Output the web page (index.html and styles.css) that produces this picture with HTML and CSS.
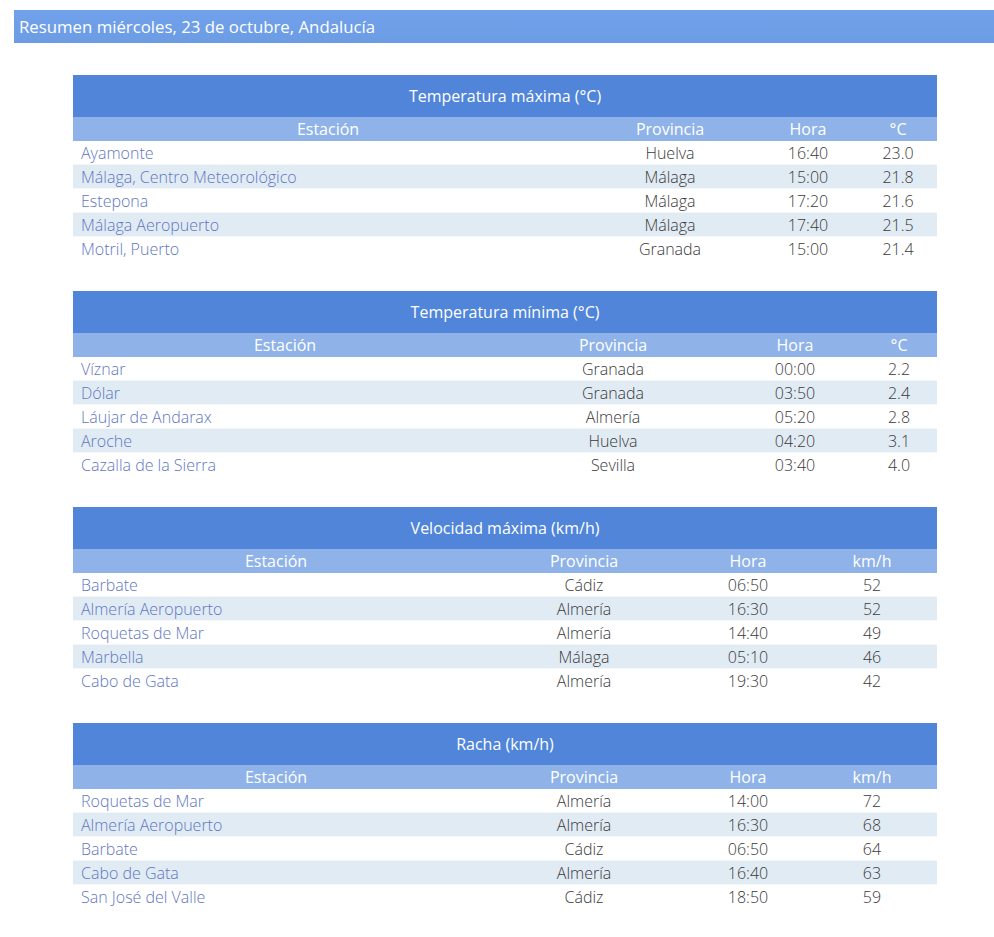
FILE: index.html
```html
<!DOCTYPE html>
<html lang="es">
<head>
<meta charset="utf-8">
<title>Resumen</title>
<link rel="stylesheet" href="styles.css">
</head>
<body>
<div class="page">
  <div class="topbar">Resumen miércoles, 23 de octubre, Andalucía</div>
  <div class="tables">
    <table class="data t1">
      <colgroup><col class="c1"><col class="c2"><col class="c3"><col class="c4"></colgroup>
      <thead>
        <tr class="title"><th colspan="4">Temperatura máxima (°C)</th></tr>
        <tr class="head"><th>Estación</th><th>Provincia</th><th>Hora</th><th>°C</th></tr>
      </thead>
      <tbody>
        <tr><td class="st">Ayamonte</td><td>Huelva</td><td>16:40</td><td>23.0</td></tr>
        <tr><td class="st">Málaga, Centro Meteorológico</td><td>Málaga</td><td>15:00</td><td>21.8</td></tr>
        <tr><td class="st">Estepona</td><td>Málaga</td><td>17:20</td><td>21.6</td></tr>
        <tr><td class="st">Málaga Aeropuerto</td><td>Málaga</td><td>17:40</td><td>21.5</td></tr>
        <tr><td class="st">Motril, Puerto</td><td>Granada</td><td>15:00</td><td>21.4</td></tr>
      </tbody>
    </table>
    <table class="data t2">
      <colgroup><col class="c1"><col class="c2"><col class="c3"><col class="c4"></colgroup>
      <thead>
        <tr class="title"><th colspan="4">Temperatura mínima (°C)</th></tr>
        <tr class="head"><th>Estación</th><th>Provincia</th><th>Hora</th><th>°C</th></tr>
      </thead>
      <tbody>
        <tr><td class="st">Víznar</td><td>Granada</td><td>00:00</td><td>2.2</td></tr>
        <tr><td class="st">Dólar</td><td>Granada</td><td>03:50</td><td>2.4</td></tr>
        <tr><td class="st">Láujar de Andarax</td><td>Almería</td><td>05:20</td><td>2.8</td></tr>
        <tr><td class="st">Aroche</td><td>Huelva</td><td>04:20</td><td>3.1</td></tr>
        <tr><td class="st">Cazalla de la Sierra</td><td>Sevilla</td><td>03:40</td><td>4.0</td></tr>
      </tbody>
    </table>
    <table class="data t3">
      <colgroup><col class="c1"><col class="c2"><col class="c3"><col class="c4"></colgroup>
      <thead>
        <tr class="title"><th colspan="4">Velocidad máxima (km/h)</th></tr>
        <tr class="head"><th>Estación</th><th>Provincia</th><th>Hora</th><th>km/h</th></tr>
      </thead>
      <tbody>
        <tr><td class="st">Barbate</td><td>Cádiz</td><td>06:50</td><td>52</td></tr>
        <tr><td class="st">Almería Aeropuerto</td><td>Almería</td><td>16:30</td><td>52</td></tr>
        <tr><td class="st">Roquetas de Mar</td><td>Almería</td><td>14:40</td><td>49</td></tr>
        <tr><td class="st">Marbella</td><td>Málaga</td><td>05:10</td><td>46</td></tr>
        <tr><td class="st">Cabo de Gata</td><td>Almería</td><td>19:30</td><td>42</td></tr>
      </tbody>
    </table>
    <table class="data t3">
      <colgroup><col class="c1"><col class="c2"><col class="c3"><col class="c4"></colgroup>
      <thead>
        <tr class="title"><th colspan="4">Racha (km/h)</th></tr>
        <tr class="head"><th>Estación</th><th>Provincia</th><th>Hora</th><th>km/h</th></tr>
      </thead>
      <tbody>
        <tr><td class="st">Roquetas de Mar</td><td>Almería</td><td>14:00</td><td>72</td></tr>
        <tr><td class="st">Almería Aeropuerto</td><td>Almería</td><td>16:30</td><td>68</td></tr>
        <tr><td class="st">Barbate</td><td>Cádiz</td><td>06:50</td><td>64</td></tr>
        <tr><td class="st">Cabo de Gata</td><td>Almería</td><td>16:40</td><td>63</td></tr>
        <tr><td class="st">San José del Valle</td><td>Cádiz</td><td>18:50</td><td>59</td></tr>
      </tbody>
    </table>
  </div>
</div>
</body>
</html>
```

FILE: styles.css
```css
html, body {
  margin: 0;
  padding: 0;
  background: #ffffff;
}

body {
  font-family: "Open Sans", "Liberation Sans", sans-serif;
  color: #333333;
}

.page {
  padding: 10px 0 0 14px;
}

.topbar {
  height: 33px;
  line-height: 33px;
  padding-left: 5px;
  background: linear-gradient(#70a1ea, #6b9ce4);
  color: #ffffff;
  font-size: 16.8px;
  font-weight: 400;
}

.tables {
  display: flex;
  flex-direction: column;
  gap: 30px;
  padding: 32px 0 0 59px;
  width: 864px;
}

.data {
  width: 864px;
  border-collapse: collapse;
  table-layout: fixed;
}

.data th,
.data td {
  padding: 0;
  text-align: center;
  white-space: nowrap;
}

.data .title th {
  height: 42px;
  background: #5085d9;
  color: #ffffff;
  font-size: 16px;
  font-weight: 400;
}

.data .head th {
  height: 24px;
  background: #8fb3e8;
  color: #ffffff;
  font-size: 16px;
  font-weight: 400;
}

.data tbody td {
  height: 23px;
  border-bottom: 1px solid #f4f7fa;
  font-size: 16px;
  font-weight: 300;
  color: #3a3a3a;
}

.data tbody tr:last-child td {
  border-bottom-color: #ffffff;
}

.data tbody tr:nth-child(even) td {
  background: #e1ebf4;
}

.data tbody td.st {
  text-align: left;
  padding-left: 8px;
  color: #5f77c2;
}

.t1 .c1 { width: 510px; }
.t1 .c2 { width: 174px; }
.t1 .c3 { width: 102px; }
.t1 .c4 { width: 78px; }

.t2 .c1 { width: 424px; }
.t2 .c2 { width: 232px; }
.t2 .c3 { width: 132px; }
.t2 .c4 { width: 76px; }

.t3 .c1 { width: 406px; }
.t3 .c2 { width: 210px; }
.t3 .c3 { width: 118px; }
.t3 .c4 { width: 130px; }
```
